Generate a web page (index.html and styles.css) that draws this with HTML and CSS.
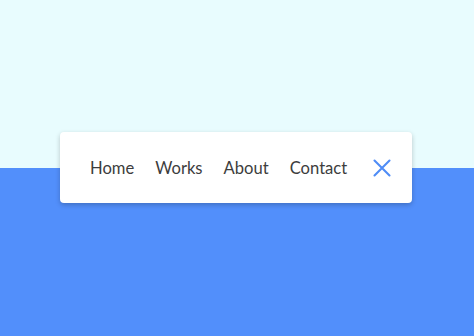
FILE: index.html
```html
<!DOCTYPE html>
<html>
<head>
<meta charset="utf-8">
<link rel="stylesheet" href="styles.css">
</head>
<body>
<div class="page">
  <div class="top"></div>
  <div class="bottom"></div>
  <nav class="card">
    <ul class="links">
      <li>Home</li>
      <li>Works</li>
      <li>About</li>
      <li>Contact</li>
    </ul>
    <svg class="close" width="18" height="18" viewBox="0 0 18 18">
      <path d="M1.5 1.5 L16.5 16.5 M16.5 1.5 L1.5 16.5" stroke="#4f8cf6" stroke-width="2.1" stroke-linecap="round" fill="none"/>
    </svg>
  </nav>
</div>
</body>
</html>
```
FILE: styles.css
```css
html, body {
  margin: 0;
  padding: 0;
}
body {
  width: 474px;
  height: 336px;
  overflow: hidden;
  font-family: "Lato", "Noto Sans", sans-serif;
}
.page {
  position: relative;
  height: 336px;
  display: grid;
  grid-template-rows: 168px 168px;
}
.top { background: #e8fcfe; }
.bottom { background: #528ffb; }
.card {
  position: absolute;
  left: 60px;
  top: 132px;
  width: 352px;
  height: 71px;
  box-sizing: border-box;
  background: #fff;
  border-radius: 4px;
  box-shadow: 0 2px 5px rgba(0, 0, 0, 0.22);
  display: flex;
  align-items: center;
  padding: 0 21px 0 30px;
}
.links {
  list-style: none;
  margin: 0;
  padding: 0;
  display: flex;
  gap: 21px;
  font-size: 16.6px;
  color: #3d3d3d;
  flex: 1;
}
.close {
  display: block;
}
```
